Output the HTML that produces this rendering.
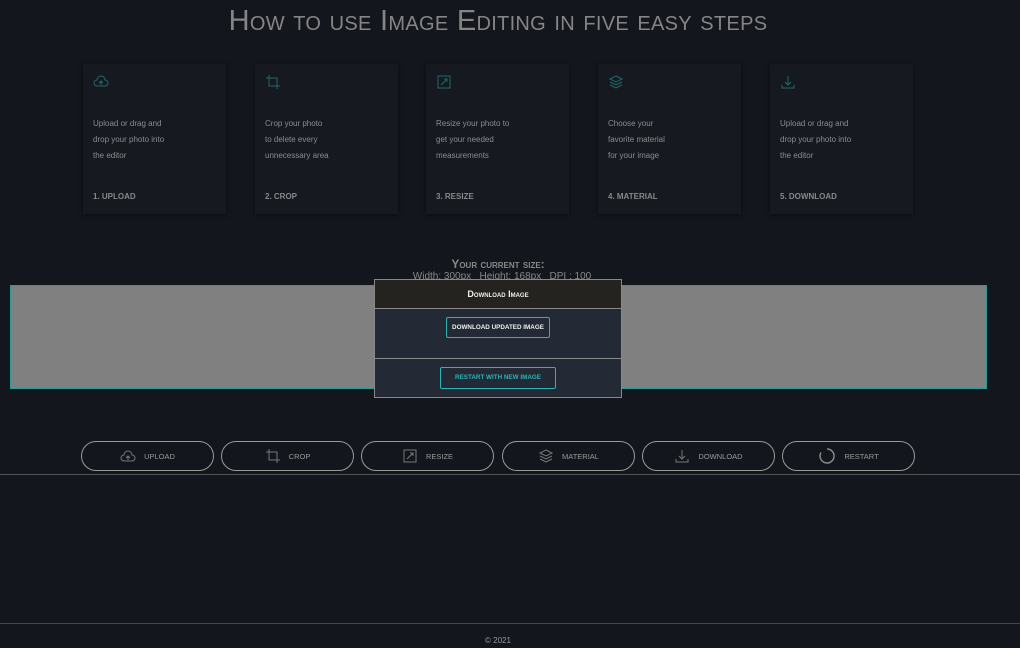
<!DOCTYPE html>
<html><head><meta charset="utf-8"><style>
*{margin:0;padding:0;box-sizing:border-box}
body{width:1020px;height:648px;background:#13161d;font-family:"Liberation Sans",sans-serif;position:relative;overflow:hidden;color:#999}
h1{position:absolute;top:5px;left:0;width:996px;text-align:center;font-weight:normal;font-variant:small-caps;font-size:29px;color:#858585;letter-spacing:.3px}
.card{position:absolute;top:64px;width:143px;height:150px;background:#161920;box-shadow:0 1px 4px rgba(0,0,0,.5)}
.card svg{position:absolute;left:10px;top:10px}
.card p{position:absolute;left:10px;top:52px;font-size:8px;line-height:16px;color:#8c8c8c}
.card b{position:absolute;left:10px;top:128px;font-size:8px;font-weight:bold;color:#888}
.size{position:absolute;top:257px;left:0;width:996px;text-align:center;font-variant:small-caps;font-weight:bold;font-size:12px;color:#888}
.size2{position:absolute;top:271px;left:0;width:1004px;text-align:center;font-size:10px;color:#888}
.gray{position:absolute;left:10px;top:285px;width:977px;height:104px;background:#808080;border:1px solid #2a9a9a}
.modal{position:absolute;left:374px;top:279px;width:248px;height:119px;border:1px solid #888;background:#232a36}
.mh{height:29px;background:#252320;border-bottom:1px solid #888;text-align:center;font-variant:small-caps;font-weight:bold;font-size:9px;color:#eee;line-height:29px}
.mb{position:absolute;left:0;right:0;top:29px;height:50px;border-bottom:1px solid #888}
.btn1{position:absolute;left:71px;top:8px;width:104px;height:21px;border:1px solid #2ab4b4;border-radius:2px;font-size:6.3px;font-weight:bold;color:#eee;text-align:center;line-height:19px;white-space:nowrap}
.btn2{position:absolute;left:65px;top:87px;width:116px;height:22px;border:1px solid #2ab4b4;border-radius:2px;font-size:6.3px;font-weight:bold;color:#2ab4b4;text-align:center;line-height:20px;white-space:nowrap}
.pb{position:absolute;top:441px;width:133px;height:30px;border:1px solid #999;border-radius:15px;font-size:7.5px;color:#999;display:flex;align-items:center;justify-content:center;gap:8px}
.line{position:absolute;left:0;width:1020px;height:1px;background:#555}
.foot{position:absolute;top:636px;width:996px;text-align:center;font-size:8px;color:#999}
</style></head><body>
<h1>How to use Image Editing in five easy steps</h1>

<div class="card" style="left:83px"><svg width="16" height="16" viewBox="0 0 16 16" fill="none" stroke="#1e6b6b"><path d="M4 12h8a3 3 0 0 0 0-6 4 4 0 0 0-8 0 3 3 0 0 0 0 6zM8 11V7M6 9l2-2 2 2"/></svg><p>Upload or drag and<br>drop your photo into<br>the editor</p><b>1. UPLOAD</b></div>
<div class="card" style="left:255px"><svg width="16" height="16" viewBox="0 0 16 16" fill="none" stroke="#1e6b6b"><path d="M4 1v11h11M1 4h11v11"/></svg><p>Crop your photo<br>to delete every<br>unnecessary area</p><b>2. CROP</b></div>
<div class="card" style="left:426px"><svg width="16" height="16" viewBox="0 0 16 16" fill="none" stroke="#1e6b6b"><path d="M2 2h12v12H2zM5 11l6-6M8 5h3v3"/></svg><p>Resize your photo to<br>get your needed<br>measurements</p><b>3. RESIZE</b></div>
<div class="card" style="left:598px"><svg width="16" height="16" viewBox="0 0 16 16" fill="none" stroke="#1e6b6b"><path d="M8 2l6 3-6 3-6-3zM2 8l6 3 6-3M2 11l6 3 6-3"/></svg><p>Choose your<br>favorite material<br>for your image</p><b>4. MATERIAL</b></div>
<div class="card" style="left:770px"><svg width="16" height="16" viewBox="0 0 16 16" fill="none" stroke="#1e6b6b"><path d="M8 2v9M5 8l3 3 3-3M2 11v3h12v-3"/></svg><p>Upload or drag and<br>drop your photo into<br>the editor</p><b>5. DOWNLOAD</b></div>

<div class="size">Your current size:</div>
<div class="size2">Width: 300px &nbsp;&nbsp;Height: 168px &nbsp;&nbsp;DPI : 100</div>
<div class="gray"></div>
<div class="modal"><div class="mh">Download Image</div><div class="mb"><div class="btn1">DOWNLOAD UPDATED IMAGE</div></div><div class="btn2">RESTART WITH NEW IMAGE</div></div>

<div class="pb" style="left:81px"><svg width="16" height="14" viewBox="0 0 16 14" fill="none" stroke="#777"><path d="M4 12h8a3 3 0 0 0 0-6 4 4 0 0 0-8 0 3 3 0 0 0 0 6zM8 11V7M6 9l2-2 2 2"/></svg>UPLOAD</div>
<div class="pb" style="left:221px"><svg width="16" height="16" viewBox="0 0 16 16" fill="none" stroke="#777"><path d="M4 1v11h11M1 4h11v11"/></svg>CROP</div>
<div class="pb" style="left:361px"><svg width="16" height="16" viewBox="0 0 16 16" fill="none" stroke="#777"><path d="M2 2h12v12H2zM5 11l6-6M8 5h3v3"/></svg>RESIZE</div>
<div class="pb" style="left:502px"><svg width="16" height="16" viewBox="0 0 16 16" fill="none" stroke="#777"><path d="M8 2l6 3-6 3-6-3zM2 8l6 3 6-3M2 11l6 3 6-3"/></svg>MATERIAL</div>
<div class="pb" style="left:642px"><svg width="16" height="16" viewBox="0 0 16 16" fill="none" stroke="#777"><path d="M8 2v9M5 8l3 3 3-3M2 11v3h12v-3"/></svg>DOWNLOAD</div>
<div class="pb" style="left:782px"><svg width="18" height="18" viewBox="0 0 18 18" fill="none" stroke="#888" stroke-width="1.5"><path d="M9 2a7 7 0 1 1-6 3.5"/></svg>RESTART</div>

<div class="line" style="top:474px"></div>
<div class="line" style="top:623px;background:#444"></div>
<div class="foot">© 2021</div>
</body></html>
